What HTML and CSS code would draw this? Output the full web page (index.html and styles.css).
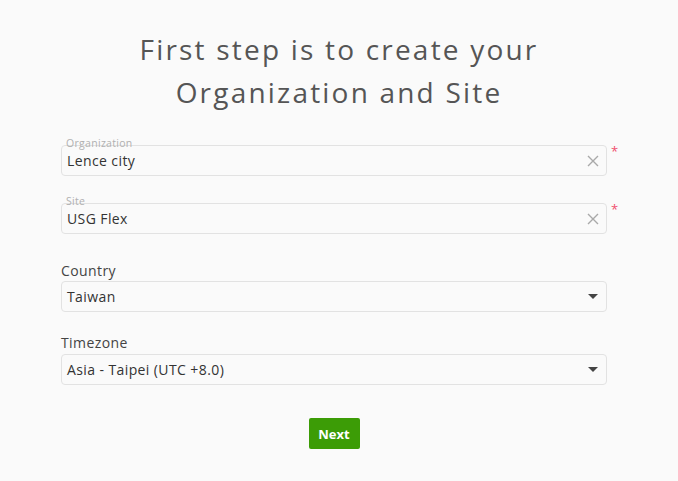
FILE: index.html
```html
<!DOCTYPE html>
<html lang="en">
<head>
  <meta charset="UTF-8">
  <title>Create Organization and Site</title>
  <link rel="stylesheet" href="styles.css">
</head>
<body>

  <h1 class="title">First step is to create your<br>Organization and Site</h1>

  <div class="form">
    <div class="row">
      <div class="field">
        <span class="float-label">Organization</span>
        <input type="text" value="Lence city">
        <span class="clear">
          <svg width="12" height="12" viewBox="0 0 12 12"><path d="M1 1L11 11M11 1L1 11" stroke="#a9a9a9" stroke-width="1.4"/></svg>
        </span>
      </div>
      <span class="req">*</span>
    </div>

    <div class="row row-site">
      <div class="field">
        <span class="float-label">Site</span>
        <input type="text" value="USG Flex">
        <span class="clear">
          <svg width="12" height="12" viewBox="0 0 12 12"><path d="M1 1L11 11M11 1L1 11" stroke="#a9a9a9" stroke-width="1.4"/></svg>
        </span>
      </div>
      <span class="req">*</span>
    </div>

    <label class="label">Country</label>
    <div class="row row-country">
      <div class="field select">
        <span class="value">Taiwan</span>
        <span class="caret"></span>
      </div>
      <span class="req"></span>
    </div>

    <label class="label label-tz">Timezone</label>
    <div class="row row-tz">
      <div class="field select">
        <span class="value">Asia - Taipei (UTC +8.0)</span>
        <span class="caret"></span>
      </div>
      <span class="req"></span>
    </div>

    <div class="actions">
      <button>Next</button>
    </div>
  </div>

</body>
</html>
```

FILE: styles.css
```css
body {
  margin: 0;
  padding: 28px 0 0;
  background: #fafafa;
  font-family: 'Open Sans', sans-serif;
  color: #333;
}

.title {
  margin: 0;
  text-align: center;
  font-size: 28px;
  font-weight: 400;
  line-height: 43px;
  letter-spacing: 2.2px;
  color: #555;
}

.form {
  width: 558px;
  margin: 31px auto 0;
  padding-left: 2px;
}

.row {
  display: flex;
  margin-bottom: 27px;
}

.row-site {
  margin-bottom: 28px;
}

.row-country {
  margin-bottom: 22px;
}

.row-tz {
  margin-bottom: 33px;
}

.field {
  position: relative;
  flex: 1;
  height: 31px;
  box-sizing: border-box;
  border: 1px solid #e2e2e2;
  border-radius: 4px;
  background: #fafafa;
  display: flex;
  align-items: center;
  padding: 0 7px 0 5px;
}

.float-label {
  position: absolute;
  left: 4px;
  top: -9px;
  font-size: 10.5px;
  letter-spacing: 0.3px;
  color: #b0b0b0;
  line-height: 12px;
}

.field input {
  flex: 1;
  border: none;
  background: transparent;
  font-family: inherit;
  font-size: 14px;
  letter-spacing: 0.4px;
  color: #333;
  padding: 0;
  outline: none;
}

.clear {
  display: flex;
}

.req {
  width: 12px;
  color: #f0506e;
  font-size: 13px;
  line-height: 13px;
  padding-left: 4px;
  box-sizing: border-box;
}

.label {
  display: block;
  font-size: 14px;
  letter-spacing: 0.4px;
  line-height: 18px;
  color: #444;
  margin-bottom: 1px;
}

.label-tz {
  margin-bottom: 2px;
}

.select .value {
  flex: 1;
  font-size: 14px;
  letter-spacing: 0.4px;
  color: #333;
}

.caret {
  width: 0;
  height: 0;
  border-left: 5px solid transparent;
  border-right: 5px solid transparent;
  border-top: 5px solid #444;
  margin-right: 1px;
}

.actions {
  display: flex;
  justify-content: center;
  padding-right: 12px;
}

button {
  width: 51px;
  height: 31px;
  border: none;
  border-radius: 2px;
  background: #3c9c06;
  color: #fff;
  font-family: 'Open Sans', sans-serif;
  font-size: 13px;
  font-weight: bold;
  cursor: pointer;
}
```
